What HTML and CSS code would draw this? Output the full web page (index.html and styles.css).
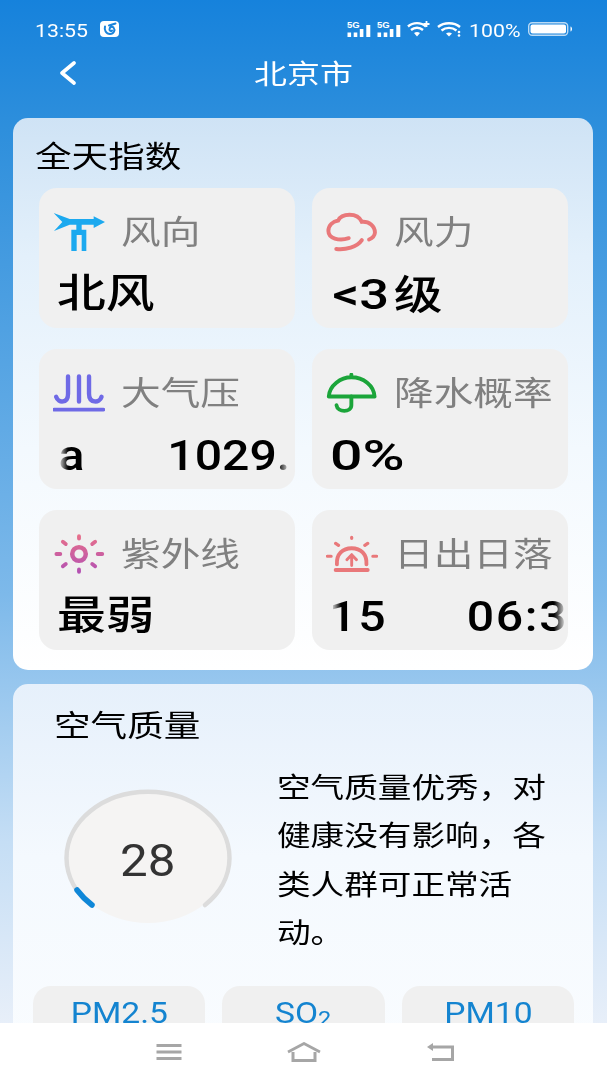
FILE: index.html
```html
<!DOCTYPE html>
<html lang="zh-CN">
  <head>
    <meta charset="UTF-8" />
    <meta name="viewport" content="width=device-width, initial-scale=1.0" />
    <link rel="stylesheet" href="styles.css">
    <title>北京市</title>
  </head>
  <body>
    <div class="status-bar">
      <div class="status-left">
        <span class="num status-time">13:55</span>
        <svg class="app-badge" viewBox="0 0 19 16">
          <rect width="19" height="16" rx="4" fill="#fff" />
          <path d="M5 5.5 C4 9 6 13 10 13 C14 13 15.5 9 13.5 6.5 C12 5 9.5 6 9.5 8.5 C9.5 10 11 10.5 12 9.5 M9 4.5 L15.5 2.5" fill="none" stroke="#1a84db" stroke-width="2" stroke-linecap="round" />
        </svg>
      </div>
      <div class="status-right">
        <svg class="signal" viewBox="0 0 24 16">
          <text x="0" y="7" class="signal-label">5G</text>
          <rect x="0.5" y="11.5" width="3.6" height="4.5" fill="#fff" />
          <rect x="6.7" y="11.5" width="3.6" height="4.5" fill="#fff" />
          <rect x="12.8" y="8" width="3.6" height="8" fill="#fff" />
          <rect x="19.3" y="4" width="4" height="12" fill="#fff" />
        </svg>
        <svg class="signal" viewBox="0 0 24 16">
          <text x="0" y="7" class="signal-label">5G</text>
          <rect x="0.5" y="11.5" width="3.6" height="4.5" fill="#fff" />
          <rect x="6.7" y="11.5" width="3.6" height="4.5" fill="#fff" />
          <rect x="12.8" y="8" width="3.6" height="8" fill="#fff" />
          <rect x="19.3" y="4" width="4" height="12" fill="#fff" />
        </svg>
        <svg class="wifi wifi-plus" viewBox="0 0 23 16">
          <path d="M1 5.5 C6 1 14 1 19 5.5 M4 9 C7.5 6 12.5 6 16 9" fill="none" stroke="#fff" stroke-width="2.4" />
          <path d="M7 12 C9 10.5 11 10.5 13 12 L10 15.5 Z" fill="#fff" />
          <path d="M19.5 0 V6 M16.5 3 H22.5" stroke="#fff" stroke-width="1.8" />
        </svg>
        <svg class="wifi" viewBox="0 0 26 16">
          <path d="M1 6 C7 1 17 1 23 6 M4.5 9.5 C9 6 15 6 19.5 9.5" fill="none" stroke="#fff" stroke-width="2.4" />
          <path d="M9 12.5 C11 11 13 11 15 12.5 L12 15.5 Z" fill="#fff" />
          <circle cx="22" cy="11" r="1.3" fill="#fff" />
          <circle cx="22" cy="14.5" r="1.3" fill="#fff" />
        </svg>
        <span class="status-battery-text"><span class="num">100%</span></span>
        <svg class="battery" viewBox="0 0 45 14">
          <rect x="0.7" y="0.7" width="39" height="12.6" rx="3.5" fill="none" stroke="#fff" stroke-opacity="0.7" stroke-width="1.4" />
          <rect x="2.5" y="2.5" width="35.5" height="9" rx="2" fill="#fff" />
          <path d="M42.5 4.5 C44.5 5 44.5 9 42.5 9.5 Z" fill="#fff" />
        </svg>
      </div>
    </div>

    <header class="top-bar">
      <svg class="back-icon" viewBox="0 0 18 24">
        <path d="M15 2 L3 12 L15 22" fill="none" stroke="#fff" stroke-width="3.6" stroke-linecap="round" stroke-linejoin="round" />
      </svg>
      <h1 class="city"><span class="wide wide-center">北京市</span></h1>
    </header>

    <main class="content">
      <section class="card card-index">
        <h2 class="card-title"><span class="wide">全天指数</span></h2>
        <div class="tiles">
          <div class="tile">
            <div class="tile-head">
              <svg class="tile-icon" viewBox="100 97 156 116">
                <path d="M102 98 L150 116 H222 V108 L256 125 L222 143 V133 H150 L103 152 L128 125 Z" fill="#1ca9ef" />
                <path d="M170 130 H186 V148 H200 V212 H186 V164 H171 V212 H155 V148 H170 Z" fill="#1ca9ef" />
              </svg>
              <span class="tile-label wide">风向</span>
            </div>
            <div class="tile-value"><span class="wide">北风</span></div>
          </div>

          <div class="tile">
            <div class="tile-head">
              <svg class="tile-icon" viewBox="82 92 156 122">
                <path d="M150 172 C120 182 88 172 88 150 C88 132 102 121 118 118 C128 96 176 92 190 122 C212 120 230 135 230 155 C229 166 222 172 212 176 M112 205 C140 208 175 200 190 178" fill="none" stroke="#e9787a" stroke-width="12" stroke-linecap="round" />
              </svg>
              <span class="tile-label wide">风力</span>
            </div>
            <div class="tile-value"><span class="wide"><span class="level">&lt;3</span>级</span></div>
          </div>

          <div class="tile">
            <div class="tile-head">
              <svg class="tile-icon" viewBox="97 572 166 122">
                <path d="M145 580 V635 C145 665 115 668 107 645 M180 580 V660 M212 580 V635 C212 665 245 668 252 645" fill="none" stroke="#6f6ae6" stroke-width="14" stroke-linecap="round" />
                <path d="M101 686 H258" fill="none" stroke="#6f6ae6" stroke-width="12" stroke-linecap="round" />
              </svg>
              <span class="tile-label wide">大气压</span>
            </div>
            <div class="tile-value tile-value-scroll tile-value-short">
              <div class="ticker num ticker-pressure">
                <span>1029.0hPa</span>
                <span>1029.0hPa</span>
              </div>
            </div>
          </div>

          <div class="tile">
            <div class="tile-head">
              <svg class="tile-icon" viewBox="82 572 156 124">
                <path d="M88 645 C90 610 125 585 158 585 C195 585 228 610 230 645 Z M158 577 V585" fill="none" stroke="#1ba53a" stroke-width="12" stroke-linejoin="round" stroke-linecap="round" />
                <path d="M158 645 V672 C158 695 115 695 112 672" fill="none" stroke="#1ba53a" stroke-width="12" stroke-linecap="round" />
              </svg>
              <span class="tile-label wide">降水概率</span>
            </div>
            <div class="tile-value tile-value-plain"><span class="num num-wide">0%</span></div>
          </div>

          <div class="tile">
            <div class="tile-head">
              <svg class="tile-icon" viewBox="100 336 156 124">
                <defs>
                  <linearGradient id="uvColor" gradientUnits="userSpaceOnUse" x1="178" y1="338" x2="178" y2="458">
                    <stop offset="0" stop-color="#e8708a" />
                    <stop offset="1" stop-color="#b250b4" />
                  </linearGradient>
                </defs>
                <circle cx="178" cy="398" r="21" fill="none" stroke="url(#uvColor)" stroke-width="14" />
                <path d="M178 343 V350 M178 446 V453 M108 398 H120 M236 398 H250 M128 360 L137 367 M228 360 L219 367 M128 436 L137 429 M228 436 L219 429" fill="none" stroke="url(#uvColor)" stroke-width="12" stroke-linecap="round" />
              </svg>
              <span class="tile-label wide">紫外线</span>
            </div>
            <div class="tile-value"><span class="wide">最弱</span></div>
          </div>

          <div class="tile">
            <div class="tile-head">
              <svg class="tile-icon" viewBox="78 338 162 120">
                <path d="M112 430 C110 398 130 380 158 380 C186 380 206 398 204 430 M108 448 H208" fill="none" stroke="#e9787a" stroke-width="12" stroke-linecap="round" stroke-linejoin="round" />
                <path d="M158 434 V402 M143 416 L158 400 L173 416" fill="none" stroke="#e9787a" stroke-width="9" stroke-linecap="round" stroke-linejoin="round" />
                <path d="M158 346 V349 M108 365 L117 371 M208 365 L199 371 M82 405 H94 M224 405 H236" fill="none" stroke="#e9787a" stroke-width="10" stroke-linecap="round" />
              </svg>
              <span class="tile-label wide">日出日落</span>
            </div>
            <div class="tile-value tile-value-scroll">
              <div class="ticker num ticker-sun">
                <span>06:35-17:15</span>
                <span>06:35-17:15</span>
              </div>
            </div>
          </div>
        </div>
      </section>

      <section class="card card-air">
        <h2 class="card-title"><span class="wide">空气质量</span></h2>
        <div class="air-row">
          <div class="gauge">
            <svg class="gauge-ring" viewBox="0 0 176 144">
              <ellipse cx="88" cy="72" rx="80" ry="65" fill="#f5f4f3" />
              <path d="M31 119 A81.5 66 0 1 1 145 119" fill="none" stroke="#dcdcdc" stroke-width="4.5" stroke-linecap="round" />
              <path d="M17 104 Q23 112 32 119" fill="none" stroke="#0f87d8" stroke-width="5.5" stroke-linecap="round" />
            </svg>
            <div class="gauge-value"><span class="num num-center">28</span></div>
          </div>
          <p class="air-text">空气质量优秀，对健康没有影响，各类人群可正常活动。</p>
        </div>
        <div class="pollutants">
          <div class="pollutant"><span class="num num-center">PM2.5</span></div>
          <div class="pollutant pollutant-narrow"><span class="num num-center">SO<sub>2</sub></span></div>
          <div class="pollutant"><span class="num num-center">PM10</span></div>
        </div>
      </section>
    </main>

    <nav class="nav-bar">
      <svg class="nav-icon nav-menu" viewBox="0 0 26 16">
        <path d="M0.5 1.5 H25.5 M0.5 8 H25.5 M0.5 14.5 H25.5" fill="none" stroke="#a6a6a6" stroke-width="3" />
      </svg>
      <svg class="nav-icon nav-home" viewBox="0 0 34 20">
        <path d="M1 10 L17 1.5 L33 10" fill="none" stroke="#a6a6a6" stroke-width="2.8" />
        <path d="M6 10 V18.5 H28 V10" fill="none" stroke="#a6a6a6" stroke-width="3" />
      </svg>
      <svg class="nav-icon nav-back" viewBox="0 0 28 19">
        <path d="M1 5 L7 1 V9 Z" fill="#a6a6a6" />
        <path d="M5 5 H26.5 V17.5 H6" fill="none" stroke="#a6a6a6" stroke-width="3" />
      </svg>
    </nav>
  </body>
</html>
```

FILE: styles.css
```css
* {
  box-sizing: border-box;
}

html,
body {
  margin: 0;
  height: 100%;
}

body {
  width: 607px;
  height: 1080px;
  display: flex;
  flex-direction: column;
  overflow: hidden;
  font-family: Roboto, "Noto Sans CJK SC", sans-serif;
  background: linear-gradient(to bottom, #1682dc 0%, #2e8fdc 12%, #7db9ea 55%, #c5def5 78%, #e8eff9 95%);
}

/* the type on this screen runs wide, so text is pulled out sideways */
.wide {
  display: inline-block;
  white-space: nowrap;
  transform: scaleX(1.22);
  transform-origin: left center;
}

.wide-center {
  transform-origin: center center;
}

/* figures and latin text need less stretch than the hanzi */
.num {
  display: inline-block;
  white-space: nowrap;
  transform: scaleX(1.12);
  transform-origin: left center;
}

.num-center {
  transform-origin: center center;
}

.num-wide {
  transform: scaleX(1.33);
}

/* status bar */
.status-bar {
  height: 52px;
  padding: 6px 34px 0 35px;
  display: flex;
  justify-content: space-between;
  align-items: center;
  color: #fff;
  flex-shrink: 0;
}

.status-left {
  display: flex;
  align-items: center;
}

.status-time {
  width: 65px;
  padding-top: 4px;
  font-size: 19px;
  line-height: 24px;
}

.app-badge {
  width: 19px;
  height: 16px;
}

.status-right {
  display: flex;
  align-items: center;
  font-size: 19px;
  line-height: 24px;
}

.signal {
  width: 24px;
  height: 16px;
  margin-right: 6px;
  overflow: visible;
}

.signal-label {
  font-size: 9.5px;
  font-weight: 700;
  fill: #fff;
  font-family: "Liberation Sans", sans-serif;
}

.wifi {
  width: 23px;
  height: 16px;
  margin-right: 7px;
}

.wifi:not(.wifi-plus) {
  width: 26px;
  margin-right: 6px;
}

.status-battery-text {
  width: 59px;
  padding-top: 4px;
}

.battery {
  width: 45px;
  height: 14px;
}

/* title row */
.top-bar {
  height: 42px;
  display: grid;
  grid-template-columns: 1fr auto 1fr;
  align-items: center;
  flex-shrink: 0;
}

.back-icon {
  width: 18px;
  height: 24px;
  margin-left: 59px;
}

.city {
  margin: 0;
  padding-top: 4px;
  color: #fff;
  font-size: 27px;
  font-weight: 400;
  line-height: 36px;
}

.content {
  flex: 1;
  min-height: 0;
  overflow: hidden;
  display: flex;
  flex-direction: column;
  gap: 14px;
  padding: 24px 14px 0 13px;
}

.card {
  flex-shrink: 0;
  border-radius: 15px;
}

.card-title {
  margin: 0;
  color: #000;
  font-size: 30px;
  font-weight: 400;
  line-height: 36px;
}

.card-index {
  padding: 21px 25px 20px 22px;
  background: linear-gradient(to bottom, #cfe3f5 0%, #e3f0fb 25%, #f3f9fe 60%, #fff 100%);
}

.card-index .card-title {
  margin-bottom: 13px;
}

.tiles {
  display: grid;
  grid-template-columns: 256px 256px;
  grid-auto-rows: 140px;
  gap: 21px 17px;
  margin-left: 4px;
}

.tile {
  padding-top: 25px;
  border-radius: 18px;
  background-color: #f0f0f0;
  overflow: hidden;
}

.tile-head {
  height: 40px;
  padding-left: 14px;
  display: flex;
  align-items: center;
  gap: 16px;
}

.tile-icon {
  width: 52px;
  height: 40px;
  flex-shrink: 0;
  margin-top: -2px;
}

.tile-label {
  color: #808080;
  font-size: 32.5px;
  line-height: 40px;
}

.tile-value {
  height: 48px;
  margin-top: 17px;
  padding-left: 18px;
  color: #000;
  font-size: 40px;
  font-weight: 500;
  line-height: 48px;
}

.level {
  margin: 0 4px 0 2px;
  font-size: 43px;
}

.tile-value-plain {
  font-size: 43px;
}

.tile-value-scroll {
  margin-left: 19px;
  padding-left: 0;
  overflow: hidden;
  font-size: 43px;
  -webkit-mask-image: linear-gradient(to right, transparent, #000 10px, #000 calc(100% - 14px), transparent calc(100% - 2px));
  mask-image: linear-gradient(to right, transparent, #000 10px, #000 calc(100% - 14px), transparent calc(100% - 2px));
}

.tile-value-short {
  margin-right: 3px;
}

.ticker {
  display: flex;
  gap: 74px;
}

.ticker-pressure {
  margin-left: -207px;
}

.ticker-sun {
  margin-left: -223px;
  gap: 71px;
  letter-spacing: 1.5px;
}

/* air quality */
.card-air {
  padding: 24px 19px 40px 20px;
  background: linear-gradient(to bottom, #e6f0fb 0%, #f4f9fe 40%, #fbfdff 100%);
}

.card-air .card-title {
  margin-left: 21px;
}

.air-row {
  margin-top: 21px;
  padding-left: 27px;
  display: flex;
  gap: 41px;
}

.gauge {
  position: relative;
  width: 176px;
  height: 144px;
  margin-top: 21px;
  flex-shrink: 0;
}

.gauge-ring {
  display: block;
  width: 176px;
  height: 144px;
}

.gauge-value {
  position: absolute;
  top: 0;
  left: 0;
  right: 0;
  bottom: 0;
  padding-top: 6px;
  display: flex;
  justify-content: center;
  align-items: center;
  color: #333;
  font-size: 44px;
  line-height: 48px;
}

.air-text {
  width: 226px;
  margin: 0;
  color: #000;
  font-size: 28px;
  line-height: 48.3px;
  transform: scaleX(1.2);
  transform-origin: left top;
}

.pollutants {
  margin-top: 28px;
  display: flex;
  gap: 17px;
}

.pollutant {
  width: 172px;
  height: 90px;
  padding-top: 8px;
  border-radius: 18px;
  background-color: #f0f0f0;
  color: #1484d0;
  font-size: 30px;
  line-height: 38px;
  text-align: center;
}

.pollutant-narrow {
  width: 163px;
}

.pollutant sub {
  font-size: 21px;
  line-height: 0;
  vertical-align: -3px;
}

/* system navigation */
.nav-bar {
  position: fixed;
  left: 0;
  right: 0;
  bottom: 0;
  height: 57px;
  display: grid;
  grid-template-columns: 156px 26px 105px 34px 105px 28px;
  align-items: center;
  background-color: #fff;
}

.nav-icon {
  display: block;
}

.nav-menu {
  grid-column: 1 / 3;
  justify-self: end;
  width: 26px;
  height: 16px;
}

.nav-home {
  grid-column: 4;
  width: 34px;
  height: 20px;
}

.nav-back {
  grid-column: 6;
  width: 28px;
  height: 19px;
}
```
